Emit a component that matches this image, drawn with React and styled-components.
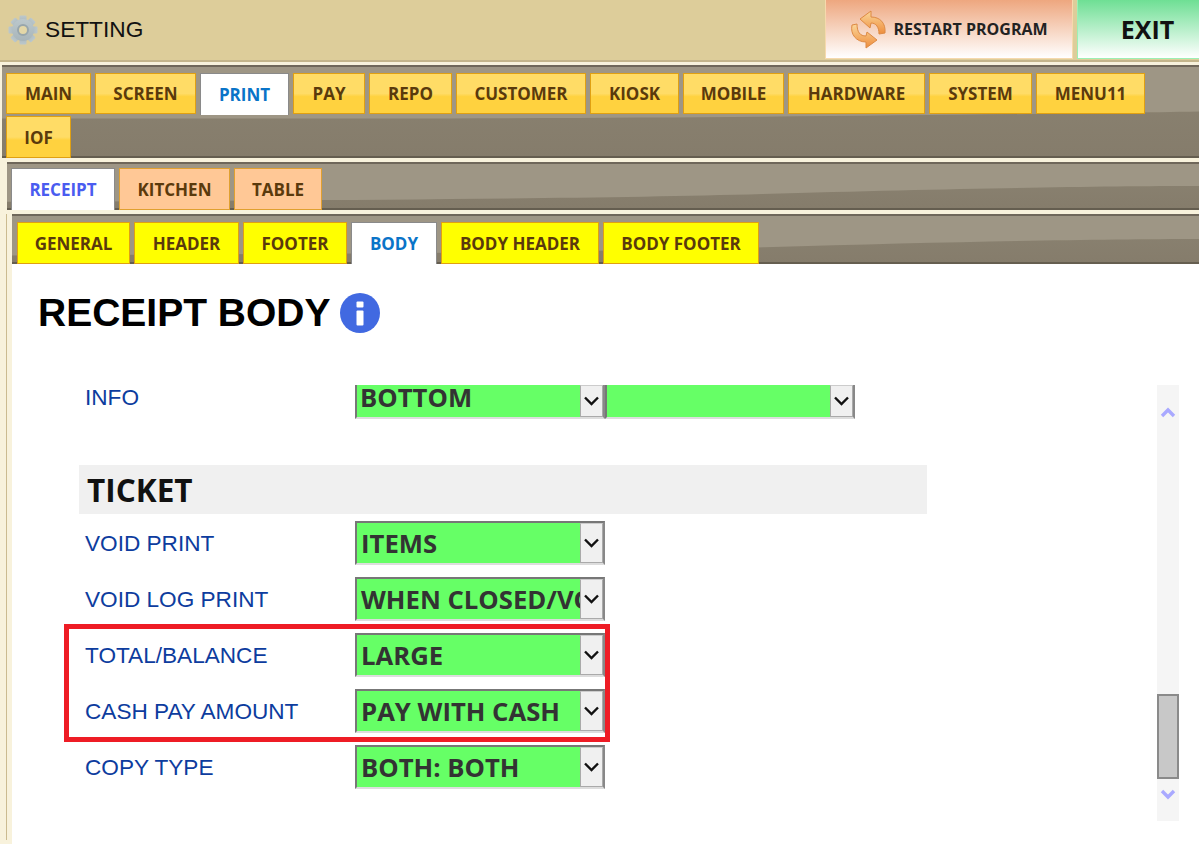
import React from "react";
import styled, { createGlobalStyle } from "styled-components";

const Global = createGlobalStyle`
  html, body { margin: 0; padding: 0; background: #fff; }
  * { box-sizing: border-box; }
`;

const Page = styled.div`
  width: 1199px; height: 844px; overflow: hidden; background: #fff;
  display: flex; flex-direction: column;
  font-family: "Open Sans", sans-serif;
`;
const TopBar = styled.header`
  height: 62px; flex: none; background: #ddcd9a; border-bottom: 2px solid #c4b58b;
  display: flex; align-items: flex-start;
`;
const Brand = styled.div`
  flex: 1; height: 59px; display: flex; align-items: center; gap: 7px; padding-left: 8px;
  font: 22.7px "Liberation Sans", sans-serif; color: #111;
`;
const RestartButton = styled.button`
  width: 248px; height: 59px; margin: 0 4px 0 0; padding: 0;
  border: 1px solid #f6d9ad; border-top: 0;
  background: linear-gradient(#eea77f, #fff);
  display: flex; align-items: center; justify-content: center; gap: 6px;
  font: 700 16px "Open Sans", sans-serif; color: #222;
`;
const ExitButton = styled.button`
  width: 122px; height: 59px; margin: 0; padding: 0 0 0 18px;
  border: 1px solid #9cf0b4; border-top: 0; border-right: 0;
  background: linear-gradient(#6edf94, #fff);
  font: 700 25px "Open Sans", sans-serif; color: #111;
`;

const Panel = styled.section`
  border-style: solid; border-color: #f8f2dc; border-width: ${p => p.$edge};
  display: flex; flex-direction: column; flex: 1; min-height: 0;
  ${p => p.$line ? "box-shadow: -5px 0 0 -4px #cbbb90;" : ""}
`;
const TabBar = styled.div`
  position: relative; overflow: hidden; flex: none;
  display: flex; flex-wrap: wrap; align-items: flex-start; align-content: flex-start;
  column-gap: 4px; row-gap: ${p => p.$rowGap || 0}px;
  height: ${p => p.$h}px; padding: ${p => p.$pad};
  background: linear-gradient(#8b8372, #857c6b);
  border-top: 2px solid #6f675a;
  box-shadow: inset 0 -2px 0 #655e50;
`;
const Wave = styled.svg`
  position: absolute; left: 0; top: 0; width: 100%; height: calc(100% - 2px);
`;
const tones = {
  gold: "background: linear-gradient(#ffdc66 0, #ffdc66 50%, #ffd23f 58%, #ffd23f 100%); border: 1px solid #e0a012;",
  peach: "background: #ffc896; border: 1px solid #e0a030;",
  yellow: "background: #ffff00; border: 1px solid #e0a012;",
};
const Tab = styled.div`
  position: relative; flex: none;
  width: ${p => p.$w}px; height: ${p => p.$h}px;
  display: flex; align-items: center; justify-content: center;
  font-weight: 700; font-size: 17px;
  color: ${p => p.$active ? p.$activeColor : "#5a3a0c"};
  ${p => p.$active
    ? "background: #fff; border: 1px solid #8a8a8a; border-bottom: 0;"
    : tones[p.$tone]}
`;
const Content = styled.main`
  flex: 1; min-height: 0; background: #fff; display: flex; flex-direction: column;
  position: relative;
`;
const TitleRow = styled.div`
  height: 121px; flex: none; display: flex; align-items: flex-start;
  gap: 9px; padding: 29px 0 0 26px;
`;
const Title = styled.h1`
  margin: 0; font: 700 39px/40px "Liberation Sans", sans-serif; color: #000;
`;
const ScrollArea = styled.div`
  flex: 1; min-height: 0; display: flex; padding: 0 20px 23px 0;
`;
const Form = styled.div`
  flex: 1; padding-left: 67px; display: flex; flex-direction: column;
`;
const Row = styled.div`
  display: flex; align-items: ${p => p.$cut ? "flex-start" : "center"};
  height: ${p => p.$h || 44}px; margin-bottom: ${p => p.$mb ?? 12}px;
`;
const Label = styled.div`
  width: 276px; padding-left: 6px; flex: none;
  font: 22.6px "Liberation Sans", sans-serif; color: #0d3c9e;
  ${p => p.$cut ? "line-height: 26px;" : "padding-top: 1px;"}
`;
const Select = styled.div`
  width: 250px; height: ${p => p.$h || 44}px; flex: none;
  display: flex; align-items: stretch; background: #66ff66;
  border-left: 2px solid #777; border-right: 2px solid #888;
  border-top: ${p => p.$cut ? 0 : "2px solid #777"};
  border-bottom: 2px solid #ddd;
`;
const SelectValue = styled.div`
  flex: 1; min-width: 0; white-space: nowrap; padding-left: ${p => p.$cut ? 3 : 4}px;
  ${p => p.$cut ? "" : "overflow-x: clip;"}
  font-weight: 700; font-size: 25.7px; line-height: ${p => p.$cut ? 26 : 41}px; color: #333;
`;
const Arrow = styled.div`
  width: 23px; flex: none; background: #f0f0f0; border: 1px solid #aaa; border-top: 1px solid #ccc;
  display: flex; align-items: center; justify-content: center;
`;
const Section = styled.div`
  width: 848px; height: 49px; margin: 46px 0 7px 0; background: #f0f0f0;
  padding-left: 8px; display: flex; align-items: center;
  font-weight: 700; font-size: 31.5px; color: #111;
`;
const Scrollbar = styled.div`
  width: 22px; flex: none; background: #f5f5f5; display: flex; flex-direction: column;
  align-items: center; position: relative;
`;
const Thumb = styled.div`
  position: absolute; left: 0; top: ${p => p.$top}px; height: ${p => p.$h}px; width: 22px;
  background: #c8c8c8; border: 2px solid #8a8a8a;
`;
const Highlight = styled.div`
  position: absolute; left: 52px; top: 360px; width: 546px; height: 118px;
  border: 5px solid #ee1c25; pointer-events: none;
`;
const ScrollArrow = styled.svg`
  display: block; margin-top: ${p => p.$top}px; flex: none;
`;

const Gear = () => (
  <svg width="30" height="30" viewBox="0 0 30 30">
    <defs>
      <linearGradient id="g" x1="0" y1="0" x2="0" y2="1">
        <stop offset="0" stopColor="#bcc8cc" /><stop offset="1" stopColor="#a8b5ba" />
      </linearGradient>
    </defs>
    <g fill="url(#g)">
      {[0, 45, 90, 135, 180, 225, 270, 315].map(a => (
        <rect key={a} x="11.5" y="0.5" width="7" height="8" rx="1" transform={`rotate(${a} 15 15)`} />
      ))}
      <circle cx="15" cy="15" r="11" />
    </g>
    <circle cx="15" cy="15" r="5" fill="#e3d7a8" stroke="#98a6ac" strokeWidth="2" />
  </svg>
);
const Recycle = () => (
  <svg width="37" height="41" viewBox="0 0 37 41">
    <defs>
      <linearGradient id="r" x1="0" y1="0" x2="0" y2="1">
        <stop offset="0" stopColor="#fbd79a" /><stop offset="1" stopColor="#ee8d3c" />
      </linearGradient>
    </defs>
    <path d="M35 24C36 14 30 8 21 8L21 2 10 10 20 19 21 14C26 14 29 18 29 25Z" fill="url(#r)" stroke="#dd8a44" strokeWidth="1" />
    <path d="M2 16C0 25 6 33 16 33L16 39 27 31 17 23 16 27C10 27 7 23 7 15Z" fill="url(#r)" stroke="#dd8a44" strokeWidth="1" />
  </svg>
);
const Info = () => (
  <svg width="40" height="40" viewBox="0 0 40 40">
    <circle cx="20" cy="20" r="20" fill="#4169e1" />
    <rect x="16.5" y="8.5" width="7" height="6" rx="1" fill="#fff" />
    <rect x="16.5" y="17.5" width="7" height="15" rx="1" fill="#fff" />
  </svg>
);
const Chevron = () => (
  <svg width="15" height="10" viewBox="0 0 15 10">
    <path d="M1 1.5l6.5 6.5L14 1.5" fill="none" stroke="#111" strokeWidth="2.4" />
  </svg>
);
const curved = "M0 0H1199V50C1100 50 950 56 760 68S300 82 0 86V0Z";
const shallow = "M0 0H1199V50C1100 52 950 54 760 56S300 58 0 58V0Z";
const WaveArt = ({ d = curved }) => (
  <Wave viewBox="0 0 1199 100" preserveAspectRatio="none">
    <path d={d} fill="#9e9685" />
  </Wave>
);

const mainTabs = [
  ["MAIN", 85], ["SCREEN", 101], ["PRINT", 89, true], ["PAY", 72], ["REPO", 83],
  ["CUSTOMER", 130], ["KIOSK", 89], ["MOBILE", 101], ["HARDWARE", 137], ["SYSTEM", 103], ["MENU11", 109], ["IOF", 65],
];
const subTabs = [["RECEIPT", 104, true], ["KITCHEN", 111], ["TABLE", 88]];
const bodyTabs = [
  ["GENERAL", 113], ["HEADER", 105], ["FOOTER", 104], ["BODY", 86, true], ["BODY HEADER", 158], ["BODY FOOTER", 156],
];
const rows = [
  ["VOID PRINT", "ITEMS"],
  ["VOID LOG PRINT", "WHEN CLOSED/VOID"],
  ["TOTAL/BALANCE", "LARGE"],
  ["CASH PAY AMOUNT", "PAY WITH CASH"],
  ["COPY TYPE", "BOTH: BOTH"],
];

export default function App() {
  return (
    <Page>
      <Global />
      <TopBar>
        <Brand><Gear />SETTING</Brand>
        <RestartButton><Recycle />RESTART PROGRAM</RestartButton>
        <ExitButton>EXIT</ExitButton>
      </TopBar>
      <Panel $edge="3px 0 0 2px">
        <TabBar $rowGap={1} $h={93} $pad="6px 0 0 4px">
          <WaveArt d={shallow} />
          {mainTabs.map(([t, w, a]) => (
            <Tab key={t} $w={w} $h={t === "IOF" || a ? 42 : 41} $tone="gold" $active={a} $activeColor="#0a74c8">{t}</Tab>
          ))}
        </TabBar>
        <Panel $edge="4px 0 0 5px">
          <TabBar $h={48} $pad="4px 0 0 4px">
            <WaveArt />
            {subTabs.map(([t, w, a]) => (
              <Tab key={t} $w={w} $h={42} $tone="peach" $active={a} $activeColor="#4a5cf0">{t}</Tab>
            ))}
          </TabBar>
          <Panel $line $edge="4px 0 0 5px">
            <TabBar $h={50} $pad="6px 0 0 5px">
              <WaveArt />
              {bodyTabs.map(([t, w, a]) => (
                <Tab key={t} $w={w} $h={42} $tone="yellow" $active={a} $activeColor="#0a74c8">{t}</Tab>
              ))}
            </TabBar>
            <Content>
              <TitleRow><Title>RECEIPT BODY</Title><Info /></TitleRow>
              <ScrollArea>
                <Form>
                  <Row $cut $h={34} $mb={0}>
                    <Label $cut>INFO</Label>
                    <Select $cut $h={34}>
                      <SelectValue $cut>BOTTOM</SelectValue><Arrow><Chevron /></Arrow>
                    </Select>
                    <Select $cut $h={34}>
                      <SelectValue $cut /><Arrow><Chevron /></Arrow>
                    </Select>
                  </Row>
                  <Section>TICKET</Section>
                  {rows.map(([l, v]) => (
                    <Row key={l}>
                      <Label>{l}</Label>
                      <Select><SelectValue>{v}</SelectValue><Arrow><Chevron /></Arrow></Select>
                    </Row>
                  ))}
                </Form>
                <Scrollbar>
                  <ScrollArrow $top={21} width="16" height="12" viewBox="0 0 16 12">
                    <path d="M2 10l6-6 6 6" fill="none" stroke="#a9a9ff" strokeWidth="3.4" />
                  </ScrollArrow>
                  <Thumb $top={309} $h={85} />
                  <ScrollArrow $top={371} width="16" height="12" viewBox="0 0 16 12">
                    <path d="M2 2l6 6 6-6" fill="none" stroke="#a9a9ff" strokeWidth="3.4" />
                  </ScrollArrow>
                </Scrollbar>
                <Highlight />
              </ScrollArea>
            </Content>
          </Panel>
        </Panel>
      </Panel>
    </Page>
  );
}
